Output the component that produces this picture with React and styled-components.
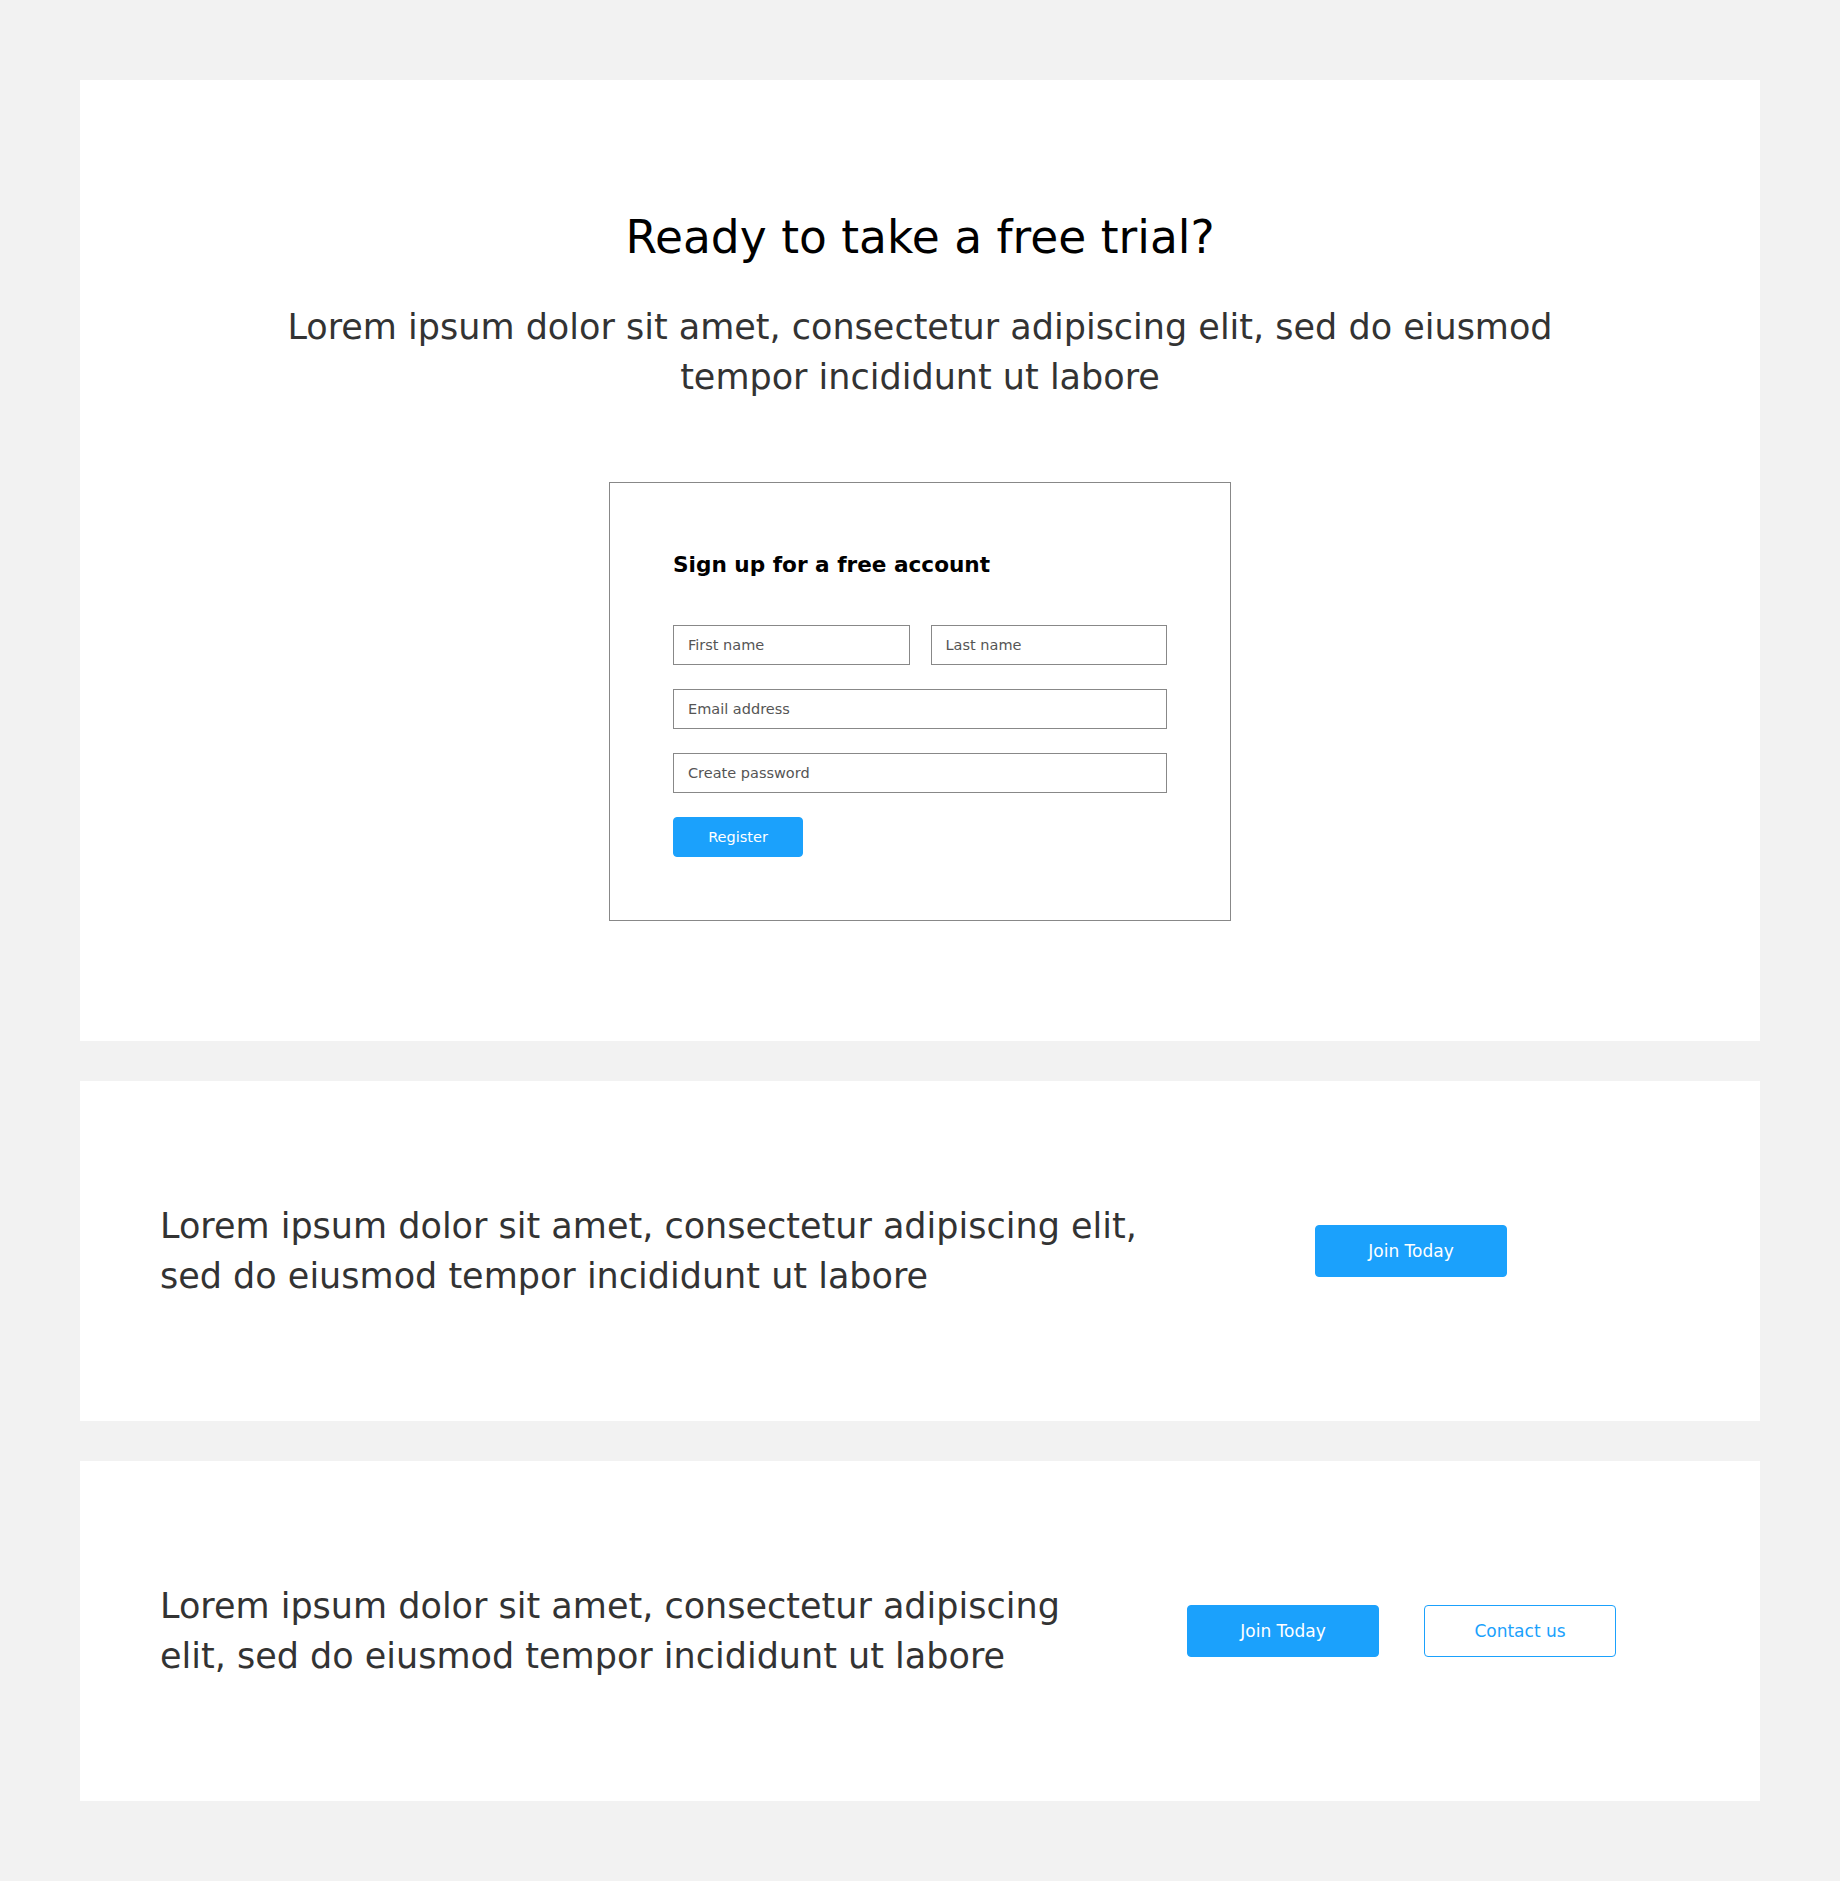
import React from 'react'
import styled, { createGlobalStyle } from 'styled-components'

const GlobalStyle = createGlobalStyle`
  * { box-sizing: border-box; }
  body {
    margin: 0;
    background: #f2f2f2;
    font-family: "DejaVu Sans", "Noto Sans", sans-serif;
    color: #333;
  }
`

const Page = styled.main`
  display: flex;
  flex-direction: column;
  gap: 40px;
  padding: 80px;
`

const Panel = styled.section`
  background: #fff;
`

const Hero = styled(Panel)`
  display: flex;
  flex-direction: column;
  align-items: center;
  padding: 132px 80px 120px;
`

const Title = styled.h1`
  margin: 0;
  font-size: 45.5px;
  line-height: 52px;
  font-weight: 400;
  color: #000;
`

const Lead = styled.p`
  margin: 38px 0 0;
  max-width: 1300px;
  font-size: 35px;
  line-height: 50px;
  text-align: center;
  color: #333;
`

const Card = styled.form`
  margin-top: 80px;
  width: 622px;
  border: 1px solid #888;
  padding: 68px 63px 63px;
  display: flex;
  flex-direction: column;
  gap: 24px;
`

const CardTitle = styled.h2`
  margin: 0 0 22px;
  font-size: 21.6px;
  line-height: 28px;
  font-weight: 700;
  color: #000;
`

const NameRow = styled.div`
  display: grid;
  grid-template-columns: 1fr 1fr;
  gap: 21px;
`

const Field = styled.input`
  display: block;
  width: 100%;
  height: 40px;
  border: 1px solid #888;
  border-radius: 0;
  padding: 0 14px;
  font-family: inherit;
  font-size: 14.5px;
  color: #333;
  background: #fff;
  outline: none;

  &::placeholder { color: #555; }
`

const Button = styled.button`
  display: inline-flex;
  align-items: center;
  justify-content: center;
  width: ${({ $w }) => $w || 192}px;
  height: ${({ $h }) => $h || 52}px;
  border-radius: 4px;
  border: 1px solid #1ba1fc;
  background: ${({ $outline }) => $outline ? '#fff' : '#1ba1fc'};
  color: ${({ $outline }) => $outline ? '#1ba1fc' : '#fff'};
  font-family: inherit;
  font-size: ${({ $fs }) => $fs || 17}px;
  cursor: pointer;
  padding: 0;
`

const Banner = styled(Panel)`
  height: 340px;
  display: flex;
  align-items: center;
  justify-content: space-between;
  padding: 0 ${({ $right }) => $right}px 0 80px;
`

const BannerText = styled.p`
  margin: 0;
  max-width: ${({ $max }) => $max}px;
  font-size: 35px;
  line-height: 50px;
  color: #333;
`

const Actions = styled.div`
  display: flex;
  gap: 45px;
`

export default function App() {
  return (
    <>
      <GlobalStyle />
      <Page>
        <Hero>
          <Title>Ready to take a free trial?</Title>
          <Lead>
            Lorem ipsum dolor sit amet, consectetur adipiscing elit, sed do eiusmod
            <br />
            tempor incididunt ut labore
          </Lead>

          <Card onSubmit={(e) => e.preventDefault()}>
            <CardTitle>Sign up for a free account</CardTitle>
            <NameRow>
              <Field placeholder="First name" />
              <Field placeholder="Last name" />
            </NameRow>
            <Field type="email" placeholder="Email address" />
            <Field type="password" placeholder="Create password" />
            <div>
              <Button type="submit" $w={130} $h={40} $fs={14.5}>Register</Button>
            </div>
          </Card>
        </Hero>

        <Banner $right={253}>
          <BannerText $max={1000}>
            Lorem ipsum dolor sit amet, consectetur adipiscing elit, sed do eiusmod tempor incididunt ut labore
          </BannerText>
          <Button>Join Today</Button>
        </Banner>

        <Banner $right={144}>
          <BannerText $max={940}>
            Lorem ipsum dolor sit amet, consectetur adipiscing elit, sed do eiusmod tempor incididunt ut labore
          </BannerText>
          <Actions>
            <Button>Join Today</Button>
            <Button $outline>Contact us</Button>
          </Actions>
        </Banner>
      </Page>
    </>
  )
}
